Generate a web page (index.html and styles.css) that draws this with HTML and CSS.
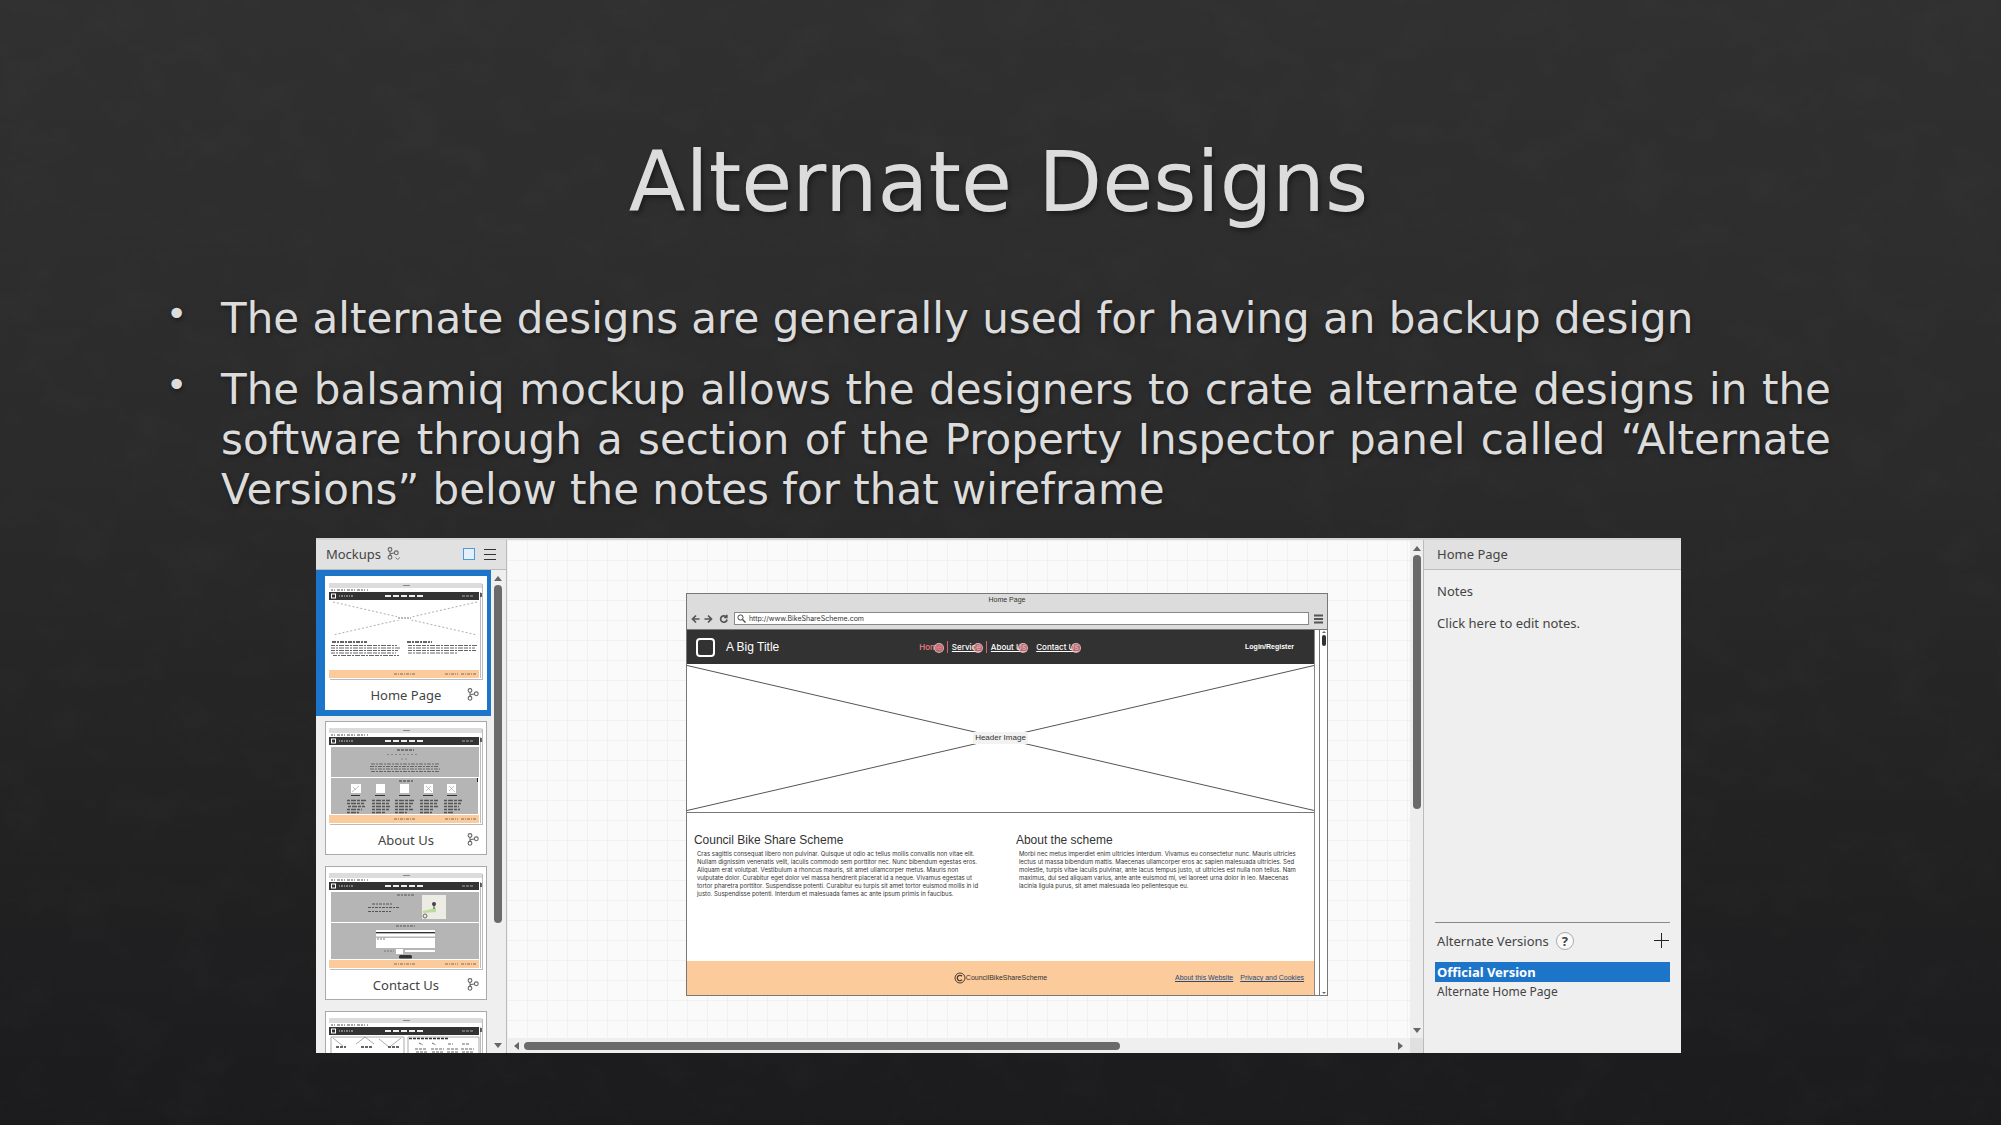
FILE: index.html
```html
<!DOCTYPE html>
<html lang="en">
<head>
<meta charset="utf-8">
<title>Alternate Designs</title>
<link rel="stylesheet" href="styles.css">
</head>
<body>
<svg class="texture" aria-hidden="true">
  <filter id="slate" x="0" y="0" width="100%" height="100%">
    <feTurbulence type="fractalNoise" baseFrequency="0.018 0.024" numOctaves="4" seed="7"/>
    <feColorMatrix values="0 0 0 0 1  0 0 0 0 1  0 0 0 0 1  1.2 0 0 0 -0.5"/>
  </filter>
  <rect width="100%" height="100%" filter="url(#slate)"/>
</svg>
<svg class="defs" aria-hidden="true">
  <symbol id="branch" viewBox="0 0 12 13">
    <g fill="none" stroke="#666" stroke-width="1.1"><circle cx="3" cy="2.5" r="1.9"/><circle cx="3" cy="10.3" r="1.9"/><circle cx="9.3" cy="5.8" r="1.9"/><path d="M3 4.4v4M3 8.4c0-1.6 2.300-2.400 4.400-2.400"/></g>
  </symbol>
  <symbol id="frame" viewBox="0 0 154 97">
    <rect x="1" y="1" width="153" height="96" fill="#bbb"/>
    <rect width="153" height="96" fill="#fff"/>
    <rect width="153" height="5" fill="#dcdcdc"/>
    <path d="M74 2.500h7" stroke="#888"/>
    <path d="M2 7h37" stroke="#888" stroke-width="1.500" stroke-dasharray="2 1 1 2 3 1"/>
    <rect y="9" width="150" height="8" fill="#333"/>
    <rect x="2.500" y="11" width="4" height="4" fill="none" stroke="#fff"/>
    <path d="M10 13h14" stroke="#ccc" stroke-dasharray="1 1 2 1"/>
    <path d="M56 13h38" stroke="#eee" stroke-width="2" stroke-dasharray="6 2"/>
    <path d="M133 13h12" stroke="#aaa" stroke-dasharray="3 1"/>
    <path d="M151.500 9v86" stroke="#bbb"/><path d="M152 10v4" stroke="#333" stroke-width="1.500"/>
    <rect y="87" width="150" height="8" fill="#fbcb9c"/>
    <path d="M65 91h21M116 91h13M132 91h15" stroke="#806850" stroke-dasharray="3 1 1 1"/>
  </symbol>
</svg>

<main class="slide">
  <h1>Alternate Designs</h1>
  <ul class="points">
    <li>The alternate designs are generally used for having an backup design</li>
    <li>The balsamiq mockup allows the designers to crate alternate designs in the software through a section of the Property Inspector panel called “Alternate Versions” below the notes for that wireframe</li>
  </ul>

  <section class="app" aria-label="Mockup editor">
    <aside class="mockups">
      <header class="bar">
        <span>Mockups</span>
        <svg class="bar-branch" viewBox="0 0 14 14"><use href="#branch" width="12" height="13"/><path d="M8.500 10.500l2.200 2 2.200-2" fill="none" stroke="#777"/></svg>
        <button class="view grid-view" aria-label="Thumbnail view"></button>
        <button class="view" aria-label="List view"><svg width="12" height="12"><path d="M0 1.500h12M0 6.500h12M0 11.500h12" stroke="#333"/></svg></button>
      </header>
      <div class="list">
        <div class="thumbs">
          <button class="thumb selected">
            <svg class="shot" viewBox="0 0 154 97"><use href="#frame"/>
              <path d="M4 19L148 52M148 19L4 52" stroke="#999" stroke-width=".8" stroke-dasharray="2 2"/><rect x="68" y="33" width="15" height="4" fill="#fff"/><path d="M69 35h13" stroke="#777" stroke-dasharray="2 1"/>
              <path d="M3 59h35M78 59h25" stroke="#333" stroke-width="1.500" stroke-dasharray="4 1 2 1"/>
              <path d="M2 62.500h66M2 65h70M2 67.500h67M2 70h65M4 72.500h66M79 62.500h69M79 65h67M79 67.500h68M79 70h50" stroke="#666" stroke-dasharray="4 1 2 1 5 1"/></svg>
            <span class="name">Home Page</span><svg class="fork"><use href="#branch"/></svg>
          </button>
          <button class="thumb">
            <svg class="shot" viewBox="0 0 154 97"><use href="#frame"/>
              <rect x="2" y="19" width="148" height="30" fill="#b5b5b5"/><rect x="2" y="50" width="147" height="36" fill="#b5b5b5"/>
              <path d="M68 22h17M70 53h14" stroke="#333" stroke-dasharray="3 1"/><path d="M58 26.500h32M72 31h8" stroke="#888" stroke-dasharray="2 2"/>
              <path d="M42 36h69M41 38.500h69M41 41h70M42 43.500h69" stroke="#666" stroke-dasharray="4 1 2 1"/>
              <path d="M22 56h10v9h-10zM47 56h9v9h-9zM71 56h9v9h-9zM95 56h9v9h-9zM118 56h9v9h-9z" fill="#fff"/>
              <path d="M23 64l7-6M24 59l3 3M97 58l6 6M97 63l5-5M120 58l6 6M120 63l5-5" stroke="#999" stroke-width=".6"/>
              <path d="M22 67.500h9M46 67.500h10M70 67.500h11M94 67.500h10M118 67.500h10" stroke="#333"/>
              <path d="M18 72.500h19M43 72.500h18M66 72.500h20M91 72.500h18M115 72.500h18M18 75.500h17M43 75.500h17M66 75.500h18M91 75.500h17M115 75.500h17M19 78.500h17M43 78.500h18M66 78.500h16M91 78.500h18M115 78.500h15M18 81.500h15M43 81.500h17M66 81.500h18M91 81.500h14M115 81.500h16M18 84.500h12M43 84.500h14M66 84.500h12M91 84.500h12M115 84.500h9" stroke="#555" stroke-width="1.400" stroke-dasharray="3 1 5 1"/><path d="M148.500 50v4" stroke="#222"/></svg>
            <span class="name">About Us</span><svg class="fork"><use href="#branch"/></svg>
          </button>
          <button class="thumb">
            <svg class="shot" viewBox="0 0 154 97"><use href="#frame"/>
              <rect x="2" y="19" width="148" height="30" fill="#b5b5b5"/><rect x="2" y="50" width="148" height="36" fill="#b5b5b5"/>
              <path d="M68 22h17M43 31h21M39 34.500h32M39 38.500h23M67 53h19" stroke="#555" stroke-dasharray="3 1 2 1"/>
              <rect x="93" y="22" width="24" height="24" fill="#ecebe4"/><path d="M94 38l13-3v4l-13 1z" fill="#b9dc9b"/><circle cx="105" cy="31" r="2" fill="#444"/><path d="M105 32v4" stroke="#444"/><circle cx="96" cy="43" r="2" fill="none" stroke="#666"/>
              <path d="M47 57h59v3h-59zM47 61h59v2.500h-59zM47 65h59v10h-59zM67 76h7v5h-7zM76 77h30v2h-30z" fill="#fff"/><path d="M47 59.500h59M70 84h13" stroke="#333"/><path d="M55 78h10M48 66h8" stroke="#777" stroke-dasharray="2 1"/><rect x="70" y="82" width="13" height="3.500" rx="1.500" fill="#333"/></svg>
            <span class="name">Contact Us</span><svg class="fork"><use href="#branch"/></svg>
          </button>
          <button class="thumb" aria-label="Services">
            <svg class="shot" viewBox="0 0 154 97"><use href="#frame"/>
              <rect y="18" width="150" height="69" fill="#fff"/>
              <path d="M2 40V19h73v21M79 40V19h71v21M27 26l9-7 9 7M4 20l10 8M50 21l10 8M72 20l-10 8" fill="none" stroke="#888" stroke-width=".7"/>
              <path d="M7 29h10M32 29h11M59 29h11M80 20.500h40" stroke="#333" stroke-width="1.500" stroke-dasharray="3 1"/>
              <path d="M90 25l4 2M103 25l4 2M119 26h5M133 26h8M86 31h12M102 31h13M118 31h12M132 31h13M87 34h11M103 34h11M118 34h11M133 34h11" stroke="#666" stroke-dasharray="3 1"/></svg>
          </button>
        </div>
        <div class="vscroll list-scroll"><i class="tri up"></i><span class="grip"></span><i class="tri down"></i></div>
      </div>
    </aside>

    <div class="workspace">
      <div class="canvas">
        <article class="browser">
          <div class="chrome">
            <div class="tab">Home Page</div>
            <div class="address">
              <svg width="38" height="10" viewBox="0 0 38 10"><g fill="none" stroke="#555" stroke-width="1.700"><path d="M8.500 5H1.500M5 1.500L1.500 5 5 8.500M13.500 5h7M17 1.500L20.500 5 17 8.500"/><path d="M36 5.500A3.200 3.200 0 1 1 34.800 2.500M35.800 .8v2.600h-2.600"/></g></svg>
              <label class="url"><svg width="9" height="9" viewBox="0 0 9 9"><circle cx="3.500" cy="3.500" r="2.600" fill="none" stroke="#444"/><path d="M5.500 5.500l3 3" stroke="#444" stroke-width="1.300"/></svg><input value="http://www.BikeShareScheme.com" aria-label="Address"></label>
              <svg width="9" height="10"><path d="M0 1.500h9M0 5h9M0 8.500h9" stroke="#555" stroke-width="2"/></svg>
            </div>
          </div>
          <div class="view-area">
            <div class="site">
              <div class="site-head">
                <span class="logo"></span><strong>A Big Title</strong>
                <nav><a class="on" href="#">Home</a><a class="sep" href="#">Service</a><a class="sep" href="#">About Us</a><a href="#">Contact Us</a></nav>
                <button class="login">Login/Register</button>
              </div>
              <div class="hero">
                <svg viewBox="0 0 100 100" preserveAspectRatio="none"><path d="M0 1L100 99M100 1L0 99" stroke="#555" vector-effect="non-scaling-stroke"/></svg>
                <span>Header Image</span>
              </div>
              <div class="columns">
                <section><h2>Council Bike Share Scheme</h2><p>Cras sagittis consequat libero non pulvinar. Quisque ut odio ac tellus mollis convallis non vitae elit.<br>Nullam dignissim venenatis velit, iaculis commodo sem porttitor nec. Nunc bibendum egestas eros.<br>Aliquam erat volutpat. Vestibulum a rhoncus mauris, sit amet ullamcorper metus. Mauris non<br>vulputate dolor. Curabitur eget dolor vel massa hendrerit placerat id a neque. Vivamus egestas ut<br>tortor pharetra porttitor. Suspendisse potenti. Curabitur eu turpis sit amet tortor euismod mollis in id<br>justo. Suspendisse potenti. Interdum et malesuada fames ac ante ipsum primis in faucibus.</p></section>
                <section><h2>About the scheme</h2><p>Morbi nec metus imperdiet enim ultricies interdum. Vivamus eu consectetur nunc. Mauris ultricies<br>lectus ut massa bibendum mattis. Maecenas ullamcorper eros ac sapien malesuada ultricies. Sed<br>molestie, turpis vitae iaculis pulvinar, ante lacus tempus justo, ut ultricies est nulla non tellus. Nam<br>maximus, dui sed aliquam varius, ante ante euismod mi, vel laoreet urna dolor in leo. Maecenas<br>lacinia ligula purus, sit amet malesuada leo pellentesque eu.</p></section>
              </div>
              <footer class="site-foot">
                <span class="copy"><svg width="12" height="12" viewBox="0 0 12 12"><g fill="none" stroke="#4d3c2c"><circle cx="6" cy="6" r="5"/><path d="M8 4.200a2.700 2.700 0 1 0 0 3.600" stroke-width="1.300"/></g></svg>CouncilBikeShareScheme</span>
                <span class="links"><a href="#">About this Website</a><a href="#">Privacy and Cookies</a></span>
              </footer>
            </div>
            <div class="site-scroll"><i class="tri up"></i><span class="grip"></span><i class="tri down"></i></div>
          </div>
        </article>
      </div>
      <div class="vscroll canvas-scroll"><i class="tri up"></i><span class="grip"></span><i class="tri down"></i></div>
      <div class="hscroll"><i class="tri left"></i><span class="grip"></span><i class="tri right"></i></div>
      <div class="corner"></div>
    </div>

    <aside class="inspector">
      <header class="bar">Home Page</header>
      <div class="notes"><div>Notes</div><div>Click here to edit notes.</div></div>
      <div class="versions">
        <div class="versions-head"><span>Alternate Versions</span><button class="help">?</button><button class="add" aria-label="Add version"><svg width="15" height="15"><path d="M0 7.500h15M7.500 0v15" stroke="#222"/></svg></button></div>
        <button class="version current">Official Version</button>
        <button class="version">Alternate Home Page</button>
      </div>
    </aside>
  </section>
</main>
</body>
</html>
```
FILE: styles.css
```css
* { box-sizing: border-box; }
body {
  margin: 0;
  min-height: 100vh;
  background: linear-gradient(#303030, #2b2b2b 40%, #1b1b1d);
  color: #dcdcdc;
  font-family: "DejaVu Sans", sans-serif;
}
button { border: 0; padding: 0; background: none; font: inherit; color: inherit; }
svg { display: block; flex: none; }
.texture { position: absolute; inset: 0; width: 100%; height: 100%; opacity: .025; }
.defs { position: absolute; width: 0; height: 0; }

.slide { position: relative; padding: 133px 8.5% 0 8.3%; }
h1 {
  margin: 0;
  font-size: 83px;
  font-weight: 400;
  line-height: 100px;
  text-align: center;
  text-shadow: 2px 3px 5px rgba(0, 0, 0, .4);
}
.points {
  margin: 61px 0 0;
  padding: 0 0 0 55px;
  list-style: none;
  font-size: 42px;
  line-height: 50px;
  text-align: justify;
  text-shadow: 1px 2px 4px rgba(0, 0, 0, .4);
}
.points li { margin-bottom: 21px; }
.points li::before { content: "•"; float: left; margin-left: -55px; font-size: 36px; line-height: 40px; }

/* Editor */
.app {
  display: grid;
  grid-template-columns: 191px 1fr 258px;
  width: 82%;
  height: 515px;
  margin: 23px auto 0;
  border-top: 2px solid #d4d4d4;
  background: #efefef;
  color: #444;
  font: 13px/20px "Noto Sans", sans-serif;
}
.bar {
  display: flex;
  align-items: center;
  height: 30px;
  padding: 0 10px 2px;
  border-bottom: 1px solid #bbb;
  background: #e1e1e1;
}
.mockups { display: flex; flex-direction: column; min-height: 0; border-right: 1px solid #bbb; }
.bar-branch { width: 14px; height: 14px; margin: 0 auto 0 6px; }
.view { width: 12px; height: 12px; margin-left: 9px; }
.grid-view { border: 1px solid #4a9be0; background: #e4f1fc; }
.list { display: flex; flex: 1; min-height: 0; }
.thumbs { flex: 1; overflow: hidden; }
.thumb {
  display: grid;
  grid-template: 97px 1fr / 1fr auto 1fr;
  align-items: center;
  width: 162px;
  height: 134px;
  margin: 0 0 11px 9px;
  padding: 6px 3px 0;
  border: 1px solid #aaa;
  background: #fff;
  white-space: nowrap;
}
.thumb.selected { margin-top: 6px; border-color: #fff; box-shadow: -3px 0 0 6px #1c75c9, 0 0 0 6px #1c75c9; }
.shot { grid-column: 1 / -1; width: 154px; height: 97px; }
.name { grid-column: 2; }
.fork { width: 12px; height: 13px; justify-self: end; margin-right: 4px; }

.vscroll { display: flex; flex-direction: column; align-items: center; gap: 4px; width: 15px; padding: 6px 0 5px; }
.grip { border-radius: 4px; background: #6a6a6a; }
.vscroll .grip { width: 8px; }
.vscroll .down { margin-top: auto; }
.list-scroll .grip { height: 338px; }
.canvas-scroll .grip { height: 254px; }
.tri { border: 4px solid transparent; }
.up { border-top: 0; border-bottom: 5px solid #666; }
.down { border-bottom: 0; border-top: 5px solid #666; }
.left { border-left: 0; border-right: 5px solid #666; }
.right { border-right: 0; border-left: 5px solid #666; }

.workspace { display: grid; grid-template: 1fr 15px / 1fr 13px; min-width: 0; min-height: 0; }
.canvas {
  padding: 53px 82px 0 179px;
  background-color: #fafafa;
  background-image:
    linear-gradient(90deg, #f1f1f1 1px, transparent 1px),
    linear-gradient(#f1f1f1 1px, transparent 1px);
  background-size: 20px 20px;
}
.canvas-scroll { width: 13px; background: #eee; }
.hscroll { display: flex; align-items: center; gap: 5px; padding: 0 7px; background: #efefef; }
.hscroll .grip { width: 67%; height: 8px; }
.hscroll .right { margin-left: auto; }
.corner { background: #e0e0e0; }

/* Wireframe */
.browser {
  display: flex;
  flex-direction: column;
  height: 403px;
  border: 1px solid #777;
  background: #fff;
  color: #333;
  font: 7px/8px "Liberation Sans", sans-serif;
}
.browser a { color: inherit; }
.chrome { height: 36px; padding: 1px 4px 0; border-bottom: 1px solid #777; background: #dcdcdc; }
.tab { text-align: center; line-height: 9px; }
.address { display: flex; align-items: center; gap: 5px; margin-top: 8px; }
.url { display: flex; flex: 1; align-items: center; gap: 3px; height: 13px; padding: 0 2px; border: 1px solid #888; background: #fff; }
.url input { flex: 1; min-width: 0; padding: 0; border: 0; background: none; color: #333; font: 7px/10px Inter, sans-serif; }
.view-area { display: flex; flex: 1; min-height: 0; }
.site { display: flex; flex: 1; flex-direction: column; min-width: 0; border-right: 1px solid #888; white-space: nowrap; }
.site-head { display: grid; grid-template-columns: 30px 1fr auto 1fr; align-items: center; height: 34px; padding: 0 20px 0 9px; background: #323232; color: #fff; }
.logo { width: 19px; height: 19px; border: 2px solid #fff; border-radius: 4px; }
.site-head strong { font: 12px/16px "Liberation Sans", sans-serif; }
nav { display: flex; gap: 10px; margin-right: 22px; font: 500 8px/10px Inter, sans-serif; }
nav a { position: relative; }
nav a::after { content: ""; position: absolute; right: -2px; top: 1px; width: 8px; height: 8px; border-radius: 50%; background: rgba(230, 130, 140, .7); border: 1px solid rgba(255, 255, 255, .5); }
nav .on { color: #f08080; text-decoration: none; }
nav .sep::before { content: ""; position: absolute; left: -5px; top: -1px; height: 12px; border-left: 1px solid #c66; }
.login { justify-self: end; font-size: 7px; font-weight: 700; line-height: 12px; }
.hero { display: grid; place-items: center; height: 149px; border-bottom: 1px solid #777; }
.hero svg { grid-area: 1 / 1; width: 100%; height: 148px; }
.hero span { grid-area: 1 / 1; z-index: 1; padding: 1px 2px; background: #f2f2f2; font-size: 8px; line-height: 10px; }
.columns { display: grid; grid-template-columns: 322px 1fr; padding: 19px 7px 0; }
h2 { margin: 0; font: 400 12px/16px "Liberation Sans", sans-serif; }
.columns p { margin: 2px 0 0 3px; font: 6px/8px Inter, sans-serif; }
.site-foot { display: grid; grid-template-columns: 1fr auto 1fr; align-items: center; height: 34px; margin-top: auto; padding: 0 10px; background: #fbcb9c; }
.copy { grid-column: 2; display: flex; align-items: center; }
.links { display: flex; justify-content: flex-end; gap: 7px; color: #2a4a78; }
.site-scroll { display: flex; flex-direction: column; align-items: center; width: 8px; margin-left: 4px; padding: 1px 0; border-left: 1px solid #777; }
.site-scroll .tri { border-width: 2px; }
.site-scroll .up { border-top: 0; }
.site-scroll .down { border-bottom: 0; margin-top: auto; }
.site-scroll .grip { width: 4px; height: 11px; margin-top: 2px; background: #333; }

/* Inspector */
.inspector { display: flex; flex-direction: column; border-left: 1px solid #bbb; }
.inspector .bar { padding: 0 13px 2px; }
.notes { display: grid; gap: 12px; padding: 11px 13px; }
.versions { display: flex; flex-direction: column; margin: auto 11px 51px; border-top: 1px solid #888; }
.versions-head { display: flex; align-items: center; gap: 7px; height: 39px; padding: 0 1px 4px 2px; }
.help { width: 18px; height: 18px; border: 1px solid #aaa; border-radius: 50%; background: #fafafa; font-weight: 700; line-height: 16px; }
.add { margin-left: auto; }
.version { height: 20px; padding: 0 2px; font-size: 12px; text-align: left; }
.current { background: #1c75c9; color: #fff; font-size: 13px; font-weight: 700; }
```
